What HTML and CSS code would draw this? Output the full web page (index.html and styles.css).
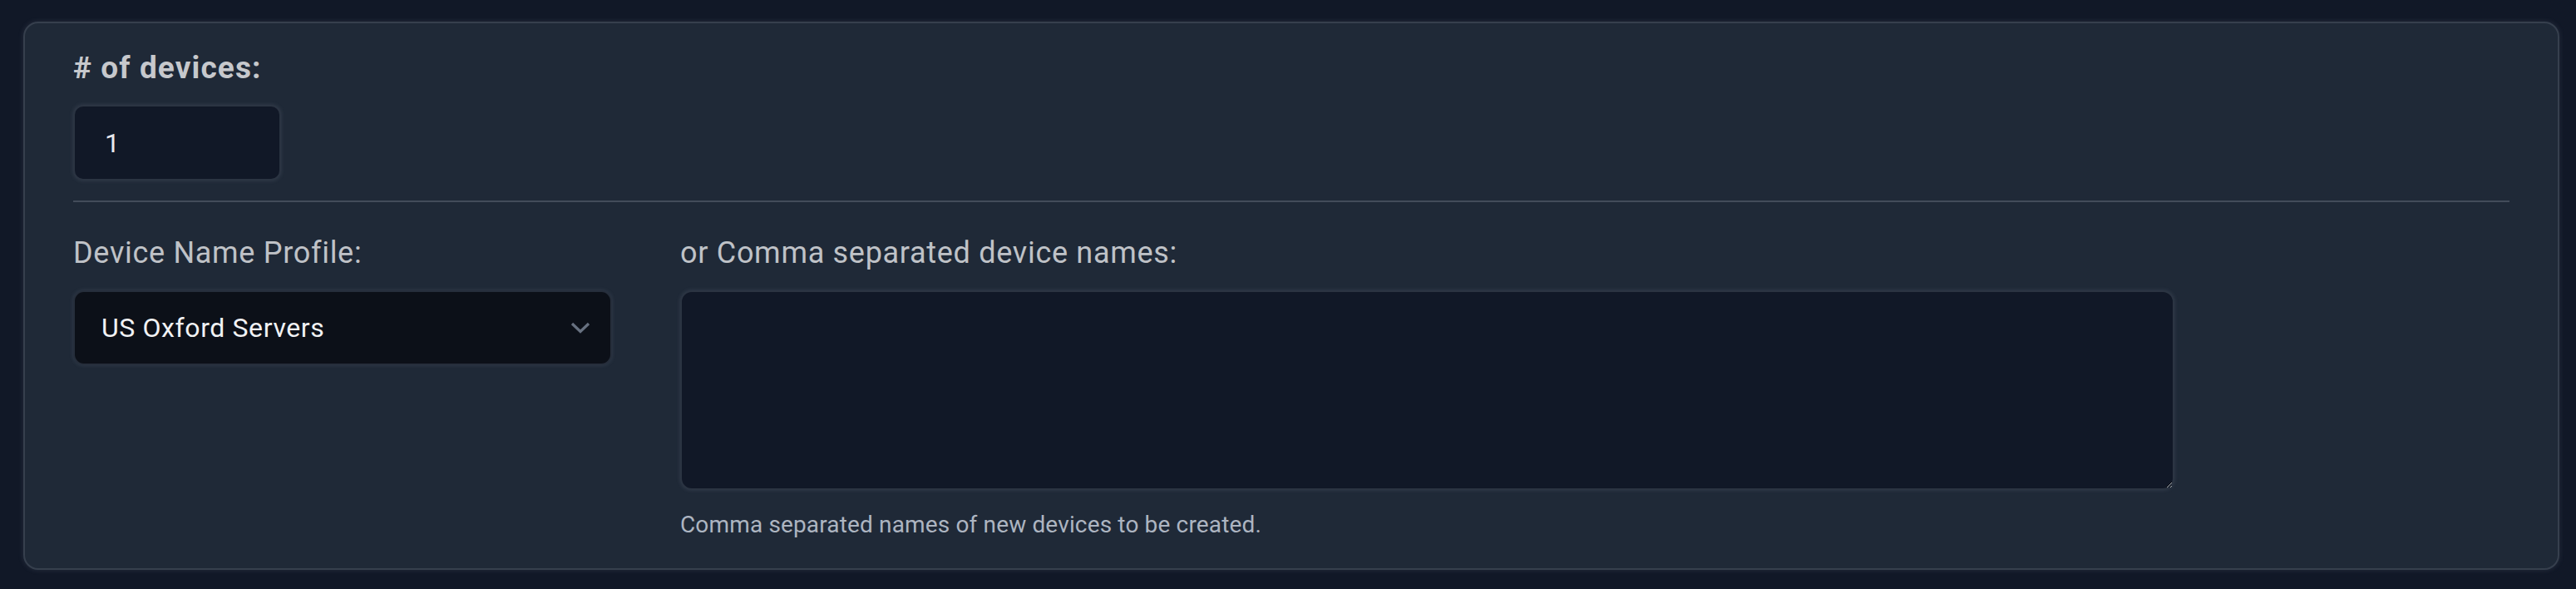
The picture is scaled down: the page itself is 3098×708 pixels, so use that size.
FILE: index.html
```html
<!DOCTYPE html>
<html lang="en">
<head>
<meta charset="utf-8">
<title>Devices</title>
<link rel="stylesheet" href="styles.css">
</head>
<body>
<div class="page">
  <section class="card">
    <div class="count-field">
      <label class="count-label" for="count"># of devices:</label>
      <input class="count-input" id="count" type="text" value="1">
    </div>
    <hr class="divider">
    <div class="names-row">
      <div class="profile-col">
        <label class="field-label">Device Name Profile:</label>
        <div class="select">
          <span class="select-value">US Oxford Servers</span>
          <svg class="chevron" width="24" height="14" viewBox="0 0 24 14"><path d="M2 2 L12 11.5 L22 2" fill="none" stroke="#677180" stroke-width="3.2"/></svg>
        </div>
      </div>
      <div class="names-col">
        <label class="field-label" for="names">or Comma separated device names:</label>
        <textarea class="names-input" id="names"></textarea>
        <p class="help">Comma separated names of new devices to be created.</p>
      </div>
    </div>
  </section>
</div>
</body>
</html>
```
FILE: styles.css
```css
html, body {
  margin: 0;
  padding: 0;
  background: #111827;
  font-family: Roboto, "Noto Sans", sans-serif;
}
.page {
  padding: 26px 20px 21px 28px;
}
.card {
  background: #1f2937;
  border: 2px solid #363f4d;
  border-radius: 18px;
  box-shadow: 0 0 6px rgba(140, 150, 170, 0.18);
  padding: 26px 58px 32px 58px;
}
.count-field {
  display: flex;
  flex-direction: column;
  align-items: flex-start;
}
.count-label {
  font-size: 37px;
  line-height: 56px;
  font-weight: 700;
  letter-spacing: 1.1px;
  color: #c6c8cc;
  margin-bottom: 16px;
}
.count-input {
  box-sizing: border-box;
  width: 250px;
  height: 91px;
  background: #111827;
  border: 2px solid #2b3442;
  border-radius: 12px;
  box-shadow: 0 0 5px rgba(140, 150, 170, 0.2);
  color: #e8e9ec;
  font-family: Roboto, "Noto Sans", sans-serif;
  font-size: 32px;
  padding: 0 36px;
  outline: none;
}
.divider {
  border: 0;
  height: 2px;
  background: #434c5a;
  margin: 24px 0 33px 0;
}
.names-row {
  display: flex;
  gap: 82px;
  align-items: flex-start;
}
.profile-col {
  width: 648px;
  display: flex;
  flex-direction: column;
}
.names-col {
  width: 1797px;
  display: flex;
  flex-direction: column;
}
.field-label {
  font-size: 36px;
  line-height: 56px;
  letter-spacing: 0.7px;
  color: #bfc2c7;
  margin-bottom: 17px;
}
.select {
  box-sizing: border-box;
  height: 90px;
  background: #0c1018;
  border: 2px solid #262e3b;
  border-radius: 13px;
  box-shadow: 0 0 5px rgba(140, 150, 170, 0.2);
  display: flex;
  align-items: center;
  justify-content: space-between;
  padding: 0 24px 0 32px;
}
.select-value {
  font-size: 32px;
  letter-spacing: 0.6px;
  color: #f1f2f4;
}
.chevron {
  display: block;
}
.names-input {
  box-sizing: border-box;
  width: 1797px;
  height: 240px;
  background: #111827;
  border: 2px solid #2b3442;
  border-radius: 14px;
  box-shadow: 0 0 5px rgba(140, 150, 170, 0.2);
  outline: none;
  margin: 0;
  resize: vertical;
  color-scheme: dark;
}
.help {
  margin: 22px 0 0 0;
  font-size: 28px;
  line-height: 40px;
  letter-spacing: 0.15px;
  color: #adb5c1;
}
```
